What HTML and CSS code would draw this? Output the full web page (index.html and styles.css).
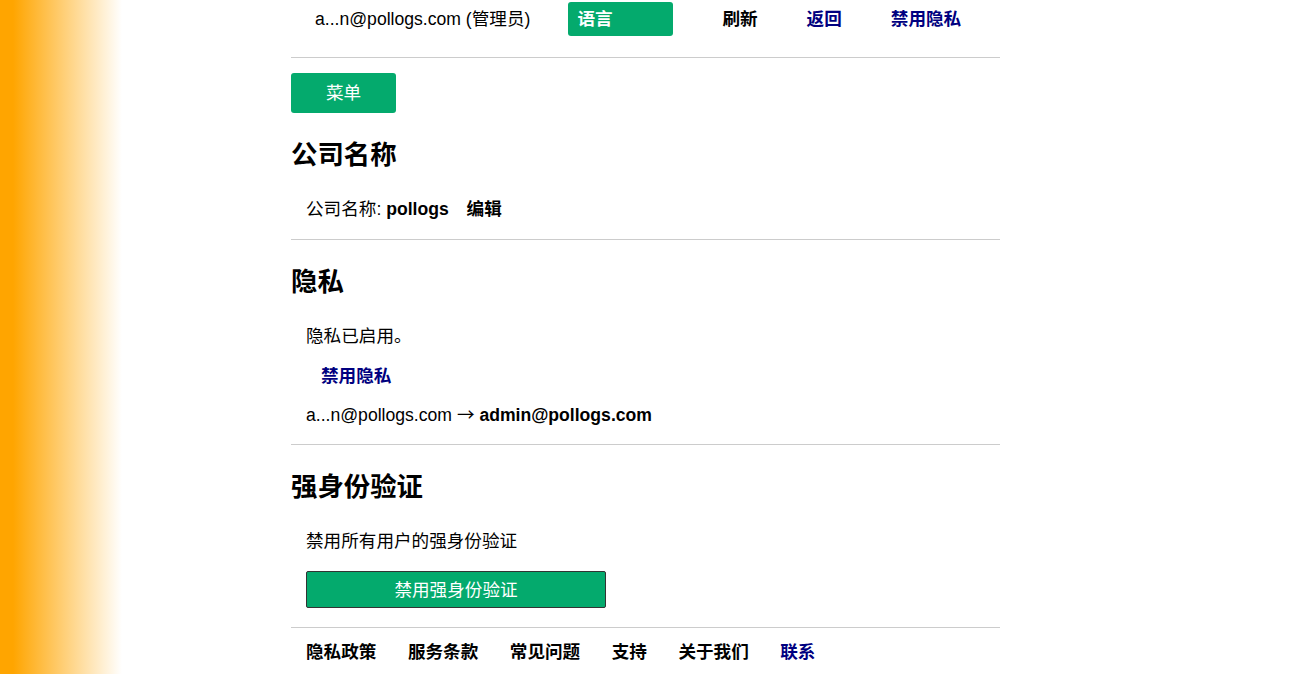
FILE: index.html
```html
<!DOCTYPE html>
<html lang="zh">
<head>
<meta charset="UTF-8">
<meta name="viewport" content="width=device-width, initial-scale=1.0">
<title>公司设置</title>
<link rel="stylesheet" href="styles.css">
</head>
<body>
<div id="page">
  <!-- top bar -->
  <div class="top-nav">
    <span class="user">a...n@pollogs.com (管理员)</span>
    <div class="lang-btn">语言</div>
    <a class="nav-link plain" href="#">刷新</a>
    <a class="nav-link" href="#">返回</a>
    <a class="nav-link" href="#">禁用隐私</a>
  </div>
  <hr>

  <button class="menu-btn">菜单</button>

  <h2 class="section-title first">公司名称</h2>
  <p class="row">公司名称: <b>pollogs</b> <a class="edit-link" href="#">编辑</a></p>
  <hr class="sep-1">

  <h2 class="section-title">隐私</h2>
  <p class="row">隐私已启用。</p>
  <p class="row sub"><a class="link" href="#">禁用隐私</a></p>
  <p class="row mail">a...n@pollogs.com <span class="arrow">→</span> <b>admin@pollogs.com</b></p>
  <hr class="sep-2">

  <h2 class="section-title">强身份验证</h2>
  <p class="row">禁用所有用户的强身份验证</p>
  <button class="wide-btn">禁用强身份验证</button>
  <hr class="sep-3">

  <div class="footer">
    <a href="#">隐私政策</a>
    <a href="#">服务条款</a>
    <a href="#">常见问题</a>
    <a href="#">支持</a>
    <a href="#">关于我们</a>
    <a class="link" href="#">联系</a>
  </div>
</div>
</body>
</html>
```

FILE: styles.css
```css
body {
  margin: 0;
  font-family: "Liberation Sans", "Noto Sans CJK SC", sans-serif;
  font-size: 17.6px;
  color: #000;
  background: linear-gradient(to right, #ffa500 13px, #ffffff 122px);
  min-height: 100vh;
}

#page {
  width: 709px;
  margin-left: calc(50% - 355px);
  background: #fff;
  min-height: 100vh;
}

a {
  text-decoration: none;
}

hr {
  border: 0;
  border-top: 1px solid #cccccc;
  margin: 0;
}

.top-nav {
  display: flex;
  align-items: center;
  height: 38px;
  margin-bottom: 19px;
  white-space: nowrap;
}

.top-nav > * {
  flex-shrink: 0;
}

.user,
.nav-link {
  padding-bottom: 4px;
}

.user {
  margin-left: 24px;
  margin-right: 38px;
}

.lang-btn {
  width: 96px;
  height: 34px;
  line-height: 34px;
  padding-left: 9px;
  background-color: #04aa6d;
  color: #fff;
  font-weight: bold;
  border-radius: 3px;
  margin-right: 49px;
}

.nav-link {
  color: #000080;
  font-weight: bold;
  margin-right: 49px;
}

.nav-link.plain {
  color: #000;
}

.menu-btn {
  display: block;
  margin-top: 15px;
  width: 105px;
  height: 40px;
  padding: 0 0 3px 0;
  border: 0;
  border-radius: 3px;
  background-color: #04aa6d;
  color: #fff;
  font-family: inherit;
  font-size: 17.6px;
}

.section-title {
  font-size: 26.4px;
  font-weight: bold;
  line-height: 30px;
  margin: 27px 0 28px 0;
}

.row {
  line-height: 22px;
  margin: 0;
  padding-left: 15px;
}

.row b {
  margin-right: 13px;
}

.mail b {
  margin-right: 0;
}

.arrow {
  font-family: "Noto Sans CJK SC", sans-serif;
}

.edit-link {
  color: #000;
  font-weight: bold;
}

.link {
  color: #000080;
  font-weight: bold;
}

.sub {
  padding-left: 30px;
  margin-top: 18px;
}

.mail {
  margin-top: 16px;
}

.sep-1 {
  margin-top: 19px;
}

.sep-2 {
  margin-top: 18px;
}

.wide-btn {
  display: block;
  margin: 19px 0 0 15px;
  width: 300px;
  height: 37px;
  padding: 0 0 2px 0;
  border: 1px solid #333;
  border-radius: 2px;
  background-color: #04aa6d;
  color: #fff;
  font-family: inherit;
  font-size: 17.6px;
}

.sep-3 {
  margin-top: 19px;
}

.footer {
  display: flex;
  gap: 31.5px;
  padding-left: 15px;
  margin-top: 13px;
  line-height: 22px;
}

.footer a {
  color: #000;
  font-weight: bold;
}

.footer a.link {
  color: #000080;
}
```
